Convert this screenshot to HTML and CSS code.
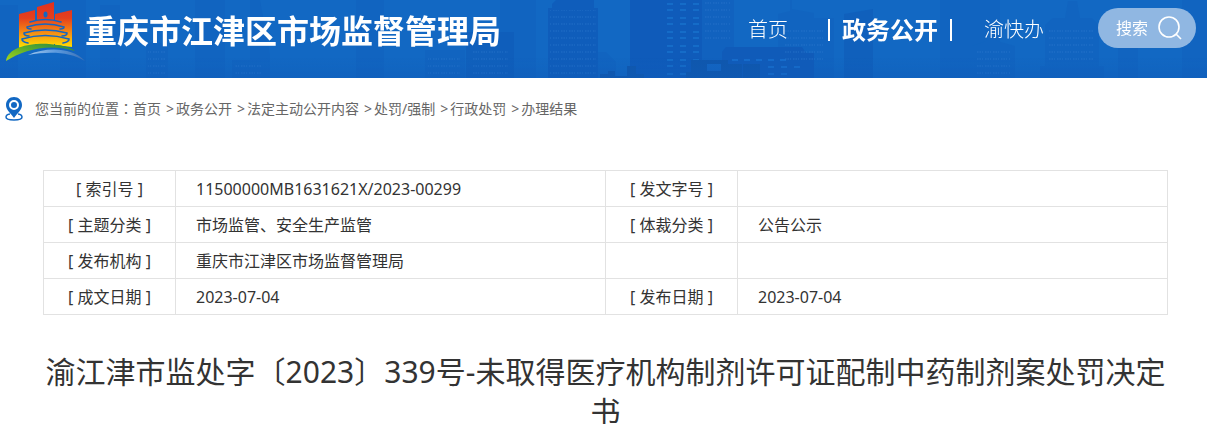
FILE: index.html
```html
<!DOCTYPE html>
<html lang="zh-CN">
<head>
    <meta charset="UTF-8">
    <meta name="viewport" content="width=device-width, initial-scale=1.0">
    <title>重庆市江津区市场监督管理局</title>
    <link rel="stylesheet" href="styles.css">
</head>
<body>
    <header class="header">
        <!-- Skyline -->
        <svg class="skyline" viewBox="0 0 1207 78" preserveAspectRatio="xMidYMax slice" aria-hidden="true">
            <defs>
                <pattern id="dots" width="8" height="7" patternUnits="userSpaceOnUse">
                    <path d="M1 3h1.500M3.500 3h1.500M6 3h1" stroke="#2b78ce" stroke-width="2" opacity=".35"/>
                </pattern>
                <pattern id="windows" x="666" y="2" width="13" height="14" patternUnits="userSpaceOnUse">
                    <path d="M1 2h6M1 8h6" stroke="#156cc8" stroke-width="2"/>
                </pattern>
                <linearGradient id="base" x1="0" y1="0" x2="0" y2="1">
                    <stop offset="0" stop-color="#105bb8" stop-opacity="0"/>
                    <stop offset="1" stop-color="#105bb8" stop-opacity=".4"/>
                </linearGradient>
            </defs>
            <g fill="#0f5bb9" opacity=".28">
                <path d="M0 5h18v73H0zM60 0h26v78H60zM100 5h20v73h-20zM146 45l10-5 12 8v30h-22zM195 0h30v78h-30zM232 60h30v18h-30zM250 0h10l10 55v23h-20zM356 0h28v78h-28zM425 50h40v28h-40zM500 0h36v78h-36zM598 52h8l10 10v16h-18zM778 14l12-3v-11h2v9l22 4v65h-36zM814 18h20v60h-20zM940 0h60v78h-60zM1118 12h20v66h-20zM1182 0h25v78h-25z"/>
                <path d="M972 46l14-5 5-12 6 12 18 5v32h-43zM1045 25l8-7h12l3-17h9l3 17h12l7 7v53h-54zM1040 66h64v12h-64z"/>
            </g>
            <g fill="#0f5ab8" opacity=".7">
                <path d="M466 32h48v46h-48z" opacity=".8"/>
                <path d="M548 8h4V4l4-4h38v8h4v70h-50z"/>
                <path d="M844 14l29-5v69h-29z" opacity=".8"/>
            </g>
            <path d="M630 0h72v78h-72z" fill="#0f5bba"/>
            <path d="M702 0h32v78h-32z" fill="#115fbc" opacity=".6"/>
            <path d="M722 52l4-5h76l4 6h8v25h-92z" fill="#105bb9"/>
            <path d="M666 0h34v78h-34z" fill="url(#windows)"/>
            <path d="M600 74h8v-3h7v5h12V66h9v8h8v4h-44zM686 72h5V60h37v4h14v14h-56zM743 64h17v14h-17z" fill="#0f57ad"/>
            <path d="M707 64h14v7h-14z" fill="#1365c2"/>
            <path d="M732 60h6m6 0h6m6 0h6m6 0h6m6 0h6M768 67h6m7 0h6m7 0h6M768 74h6m7 0h6" stroke="#166ccb" stroke-width="2"/>
            <path d="M550 10h46v68h-46zM472 48h36v30h-36zM704 2h26v40h-26zM148 50h18v28h-18zM235 62h26v16h-26zM976 50h34v28h-34zM1048 30h46v34h-46zM784 25h40v40h-40zM428 54h32v24h-32z" fill="url(#dots)"/>
            <path d="M0 58h1207v20H0z" fill="url(#base)"/>
        </svg>

        <svg class="logo" width="79" height="62" viewBox="0 0 79 62" aria-hidden="true">
            <defs>
                <linearGradient id="tower" gradientUnits="userSpaceOnUse" x1="0" y1="2" x2="0" y2="48">
                    <stop offset="0" stop-color="#e0301e"/>
                    <stop offset=".35" stop-color="#e5401d"/>
                    <stop offset=".7" stop-color="#f79512"/>
                    <stop offset="1" stop-color="#ffe400"/>
                </linearGradient>
                <linearGradient id="hill" x1="0" y1="1" x2="1" y2="0">
                    <stop offset="0" stop-color="#a6d51c"/>
                    <stop offset=".5" stop-color="#5cad2c"/>
                    <stop offset="1" stop-color="#23854a"/>
                </linearGradient>
                <linearGradient id="river" x1="0" y1="0" x2="1" y2="0">
                    <stop offset="0" stop-color="#a5c8ec"/>
                    <stop offset=".5" stop-color="#5b9ade"/>
                    <stop offset="1" stop-color="#3b6fb4"/>
                </linearGradient>
            </defs>
            <path d="M13 14l16-4v35l-16 3zM31 7l17-5v43H31zM49 14l17-4v37l-17-2z" fill="url(#tower)"/>
            <path d="M24 22q15-4 31 0l4 7 2 5 2 6q-4 5-10 4H26q-7 1-10-4l3-6 1-6z" fill="url(#tower)"/>
            <ellipse cx="39.500" cy="14.500" rx="2" ry="3" fill="#1266c3"/>
            <g fill="none" stroke="#1266c3" stroke-width="1.600" stroke-linecap="round">
                <path d="M24 22q15-5 31 0"/>
                <path d="M21 27q18-6 37 0q0 2-4 2M21 27q0 2 4 2"/>
                <path d="M18 33q21-6 43 0q0 3-5 3M18 33q0 3 5 3"/>
                <path d="M16 39q23-7 47 0q0 3-6 4M16 39q0 3 6 4"/>
            </g>
            <path d="M0 61C2 47 24 43 43 44C55 45 64 47 69 51C42 43 18 50 0 61z" fill="url(#hill)"/>
            <path d="M22 55C40 47 66 47 79 61C64 52 44 51 22 55z" fill="url(#river)"/>
        </svg>
        <h1 class="site-name">重庆市江津区市场监督管理局</h1>

        <nav class="nav">
            <a class="nav-link" href="#">首页</a>
            <a class="nav-link active" href="#">政务公开</a>
            <a class="nav-link" href="#">渝快办</a>
        </nav>

        <form class="search">
            <input class="search-input" type="text" placeholder="搜索" aria-label="搜索">
            <button class="search-btn" type="submit" aria-label="搜索">
                <svg width="24" height="24" viewBox="0 0 24 24" fill="none" stroke="#fff" stroke-width="1.600" aria-hidden="true">
                    <circle cx="11" cy="11" r="10"/>
                    <path d="M18 18l5 5"/>
                </svg>
            </button>
        </form>
    </header>

    <div class="breadcrumb">
        <svg class="pin" width="18" height="24" viewBox="0 0 18 24" aria-hidden="true">
            <path d="M5 17C2 17.500 1 18.500 1 20c0 2 4 3 8 3s8-1 8-3c0-1.500-1-2.500-4-3" fill="none" stroke="#1268c3" stroke-width="1.500"/>
            <path d="M9 0C4.500 0 1 3.500 1 8c0 4.500 4 7.500 8 13 4-5.500 8-8.500 8-13 0-4.500-3.500-8-8-8z" fill="#1268c3"/>
            <circle cx="9" cy="8" r="4" fill="none" stroke="#fff" stroke-width="2"/>
        </svg>
        <span>您当前的位置<span class="colon" lang="zh-TW">：</span></span>
        <ol class="crumbs">
            <li><a href="#">首页</a></li>
            <li><a href="#">政务公开</a></li>
            <li><a href="#">法定主动公开内容</a></li>
            <li><a href="#">处罚/强制</a></li>
            <li><a href="#">行政处罚</a></li>
            <li><a href="#">办理结果</a></li>
        </ol>
    </div>

    <main class="content">
        <table class="info">
            <colgroup>
                <col class="col-label"><col><col class="col-label"><col>
            </colgroup>
            <tr>
                <th scope="row">[ 索引号 ]</th>
                <td>11500000MB1631621X/2023-00299</td>
                <th scope="row">[ 发文字号 ]</th>
                <td></td>
            </tr>
            <tr>
                <th scope="row">[ 主题分类 ]</th>
                <td>市场监管、安全生产监管</td>
                <th scope="row">[ 体裁分类 ]</th>
                <td>公告公示</td>
            </tr>
            <tr>
                <th scope="row">[ 发布机构 ]</th>
                <td>重庆市江津区市场监督管理局</td>
                <td></td>
                <td></td>
            </tr>
            <tr>
                <th scope="row">[ 成文日期 ]</th>
                <td>2023-07-04</td>
                <th scope="row">[ 发布日期 ]</th>
                <td>2023-07-04</td>
            </tr>
        </table>

        <h2 class="title">渝江津市监处字〔2023〕339号-未取得医疗机构制剂许可证配制中药制剂案处罚决定书</h2>
    </main>
</body>
</html>
```

FILE: styles.css
```css
body {
    margin: 0;
    font-family: "Noto Sans", "Noto Sans CJK SC", sans-serif;
    font-size: 16px;
    color: #333;
    background-color: #fff;
}
a {
    color: inherit;
    text-decoration: none;
}
.header {
    position: relative;
    display: flex;
    align-items: center;
    padding: 0 11px 16px 6px;
    background-color: #1268c3;
    color: #fff;
}
.skyline {
    position: absolute;
    top: 0;
    left: 0;
    width: 100%;
    height: 100%;
}
.logo,
.site-name,
.nav,
.search {
    position: relative;
}
.logo {
    flex: none;
}
.site-name {
    margin: 0;
    font-size: 32px;
    line-height: 40px;
    font-weight: bold;
    white-space: nowrap;
}
.nav {
    display: flex;
    align-items: center;
    margin-left: auto;
    padding-bottom: 2px;
    font-weight: 300;
    white-space: nowrap;
}
.nav-link {
    font-size: 20px;
    line-height: 40px;
}
.nav-link.active {
    display: flex;
    align-items: center;
    gap: 12px;
    margin: 0 32px 0 40px;
    font-size: 24px;
    font-weight: bold;
}
.nav-link.active::before,
.nav-link.active::after {
    content: "";
    width: 2px;
    height: 22px;
    background-color: #fff;
}
.search {
    display: flex;
    align-items: center;
    box-sizing: border-box;
    width: 98px;
    height: 40px;
    margin: 0 0 6px 54px;
    padding: 0 14px 0 18px;
    border-radius: 20px;
    background-color: #90b7e2;
}
.search-input {
    flex: 1;
    min-width: 0;
    padding: 0;
    border: none;
    outline: none;
    background: none;
    font: inherit;
    color: #fff;
}
.search-input::placeholder {
    color: #fff;
}
.search-btn {
    display: flex;
    padding: 0;
    border: none;
    background: none;
    cursor: pointer;
}
.breadcrumb {
    display: flex;
    align-items: center;
    padding: 18px 5px 0;
    font-size: 14px;
    line-height: 24px;
    color: #666;
}
.pin {
    margin-right: 12px;
}
.colon {
    font-family: "Noto Sans CJK TC", sans-serif;
}
.crumbs {
    display: flex;
    margin: 0;
    padding: 0;
    list-style: none;
}
.crumbs li + li::before {
    content: ">";
    margin: 0 2px 0 5px;
}
.content {
    padding: 49px 39px 0 43px;
}
.info {
    width: 100%;
    table-layout: fixed;
    border-collapse: collapse;
    line-height: 24px;
}
.col-label {
    width: 132px;
}
.info th,
.info td {
    height: 35px;
    padding: 0 20px;
    border: 1px solid #e2e2e2;
    font-weight: normal;
    text-align: left;
}
.info th {
    padding: 0;
    text-align: center;
}
.title {
    margin: 37px 0 0;
    font-size: 30px;
    line-height: 40px;
    font-weight: normal;
    text-align: center;
}
```
